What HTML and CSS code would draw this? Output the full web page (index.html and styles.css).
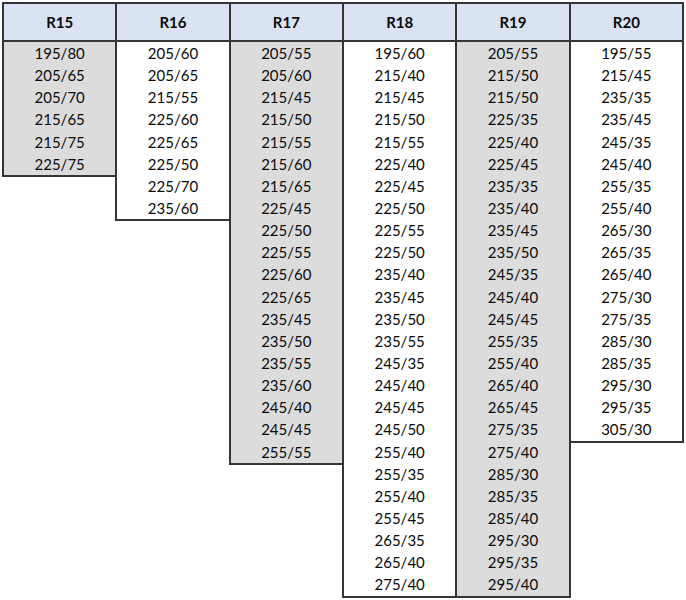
FILE: index.html
```html
<!DOCTYPE html>
<html>
<head>
<meta charset="utf-8">
<link rel="stylesheet" href="styles.css">
</head>
<body>
<div class="table">
  <div class="col gray">
    <div class="head">R15</div>
    <div class="cells">
      <div>195/80</div><div>205/65</div><div>205/70</div><div>215/65</div><div>215/75</div><div>225/75</div>
    </div>
  </div>
  <div class="col">
    <div class="head">R16</div>
    <div class="cells">
      <div>205/60</div><div>205/65</div><div>215/55</div><div>225/60</div><div>225/65</div><div>225/50</div><div>225/70</div><div>235/60</div>
    </div>
  </div>
  <div class="col gray">
    <div class="head">R17</div>
    <div class="cells">
      <div>205/55</div><div>205/60</div><div>215/45</div><div>215/50</div><div>215/55</div><div>215/60</div><div>215/65</div><div>225/45</div><div>225/50</div><div>225/55</div><div>225/60</div><div>225/65</div><div>235/45</div><div>235/50</div><div>235/55</div><div>235/60</div><div>245/40</div><div>245/45</div><div>255/55</div>
    </div>
  </div>
  <div class="col">
    <div class="head">R18</div>
    <div class="cells">
      <div>195/60</div><div>215/40</div><div>215/45</div><div>215/50</div><div>215/55</div><div>225/40</div><div>225/45</div><div>225/50</div><div>225/55</div><div>225/50</div><div>235/40</div><div>235/45</div><div>235/50</div><div>235/55</div><div>245/35</div><div>245/40</div><div>245/45</div><div>245/50</div><div>255/40</div><div>255/35</div><div>255/40</div><div>255/45</div><div>265/35</div><div>265/40</div><div>275/40</div>
    </div>
  </div>
  <div class="col gray">
    <div class="head">R19</div>
    <div class="cells">
      <div>205/55</div><div>215/50</div><div>215/50</div><div>225/35</div><div>225/40</div><div>225/45</div><div>235/35</div><div>235/40</div><div>235/45</div><div>235/50</div><div>245/35</div><div>245/40</div><div>245/45</div><div>255/35</div><div>255/40</div><div>265/40</div><div>265/45</div><div>275/35</div><div>275/40</div><div>285/30</div><div>285/35</div><div>285/40</div><div>295/30</div><div>295/35</div><div>295/40</div>
    </div>
  </div>
  <div class="col">
    <div class="head">R20</div>
    <div class="cells">
      <div>195/55</div><div>215/45</div><div>235/35</div><div>235/45</div><div>245/35</div><div>245/40</div><div>255/35</div><div>255/40</div><div>265/30</div><div>265/35</div><div>265/40</div><div>275/30</div><div>275/35</div><div>285/30</div><div>285/35</div><div>295/30</div><div>295/35</div><div>305/30</div>
    </div>
  </div>
</div>
</body>
</html>
```
FILE: styles.css
```css
html, body {
  margin: 0;
  padding: 0;
  background: #ffffff;
}
body {
  font-family: Lato, "Open Sans", sans-serif;
  color: #0a0a0a;
}
.table {
  display: flex;
  align-items: flex-start;
  padding: 2px 0 0 2px;
}
.col {
  width: 115.33px;
  flex: 0 0 auto;
  box-sizing: border-box;
  border: 2px solid #363636;
  background: #ffffff;
}
.col + .col {
  margin-left: -2px;
}
.col.gray {
  background: #dcdcdc;
}
.head {
  height: 36px;
  line-height: 37px;
  background: #dae3f3;
  border-bottom: 2px solid #363636;
  text-align: center;
  font-weight: 700;
  font-size: 15px;
}
.cells div {
  height: 22.15px;
  line-height: 23px;
  text-align: center;
  font-size: 15px;
}
```
